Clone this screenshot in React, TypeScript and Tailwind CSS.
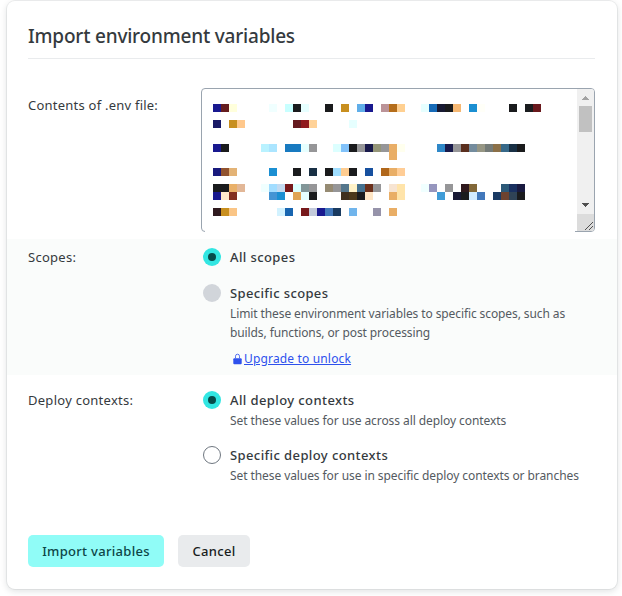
import React from 'react';

type Cell = [column: number, color: string];

const K = '#1a1b1d';
const G = '#969698';

const mosaic: { row: number; cells: Cell[] }[] = [
  { row: 0, cells: [[0, '#19198f'], [1, '#651d1f'], [2, '#ffffdc'], [7, '#f0ffff'], [9, '#c8ffff'], [10, K], [11, '#e6ffff'], [14, K], [16, '#c88f1f'], [18, '#60aee9'], [19, '#19198f'], [21, '#bb9398'], [22, '#b56e1b'], [23, '#ffd091'], [26, '#e6ffff'], [27, '#176bb8'], [28, '#181a33'], [29, K], [30, '#f5b772'], [32, '#1b8fd2'], [33, '#fffff8'], [37, K], [39, '#1a1d1f'], [40, '#6a191d']] },
  { row: 2, cells: [[0, '#191a66'], [2, '#c88f1f'], [3, '#ffc88c'], [10, '#651a1f'], [11, '#901a1d'], [12, '#ffd298'], [17, '#e6ffff']] },
  { row: 5, cells: [[0, '#19198f'], [1, K], [6, '#b9f2ff'], [7, '#abe5ff'], [9, '#187ac0'], [10, '#187ac0'], [11, '#e6ffff'], [12, G], [15, '#dcffff'], [16, '#82c2fa'], [17, K], [18, G], [19, '#191a4b'], [20, '#959678'], [21, G], [22, '#e9ae66'], [23, '#ffffee'], [28, '#2f88c8'], [29, '#191a4b'], [30, G], [31, '#5a2f1e'], [32, '#748c9d'], [33, '#969684'], [34, '#747b78'], [35, '#8b7048'], [36, '#376989'], [37, '#193045'], [38, K]] },
  { row: 6, cells: [[22, '#e9ae66']] },
  { row: 8, cells: [[0, '#191a7d'], [1, '#91532f'], [2, '#e3b376'], [7, '#1b8fd2'], [10, K], [12, '#193045'], [14, K], [15, '#a0deff'], [16, '#ffcd91'], [17, K], [19, '#17509f'], [21, '#b0671b'], [22, '#e9ae66'], [23, '#ffcd96']] },
  { row: 10, cells: [[0, K], [1, K], [2, '#e9b069'], [3, '#e2b797'], [6, '#f0ffff'], [7, '#a2ddff'], [8, '#c3daf0'], [9, '#77191b'], [10, '#dcffff'], [11, '#829698'], [12, G], [14, '#968b73'], [15, G], [16, '#54768b'], [17, '#fff2c8'], [18, '#44708f'], [19, '#6b301b'], [20, G], [22, '#f7e4d2'], [23, '#ffe4aa'], [26, '#f0ffff'], [27, '#9696be'], [29, G], [31, '#2f191d'], [32, '#826838'], [36, '#2c5978'], [37, '#193060'], [38, '#191a40']] },
  { row: 11, cells: [[0, '#19198f'], [1, '#ffeacb'], [2, '#822e20'], [7, '#4494d4'], [8, '#1b8fd2'], [10, '#e0a455'], [11, '#e6ffff'], [12, K], [16, '#3f301e'], [17, '#4b381b'], [18, K], [19, '#ffe6c5'], [22, '#e9ae66'], [23, '#ffe4aa'], [28, '#409cd7'], [30, '#191a35'], [31, K], [32, '#d2ebff'], [33, '#4278bb'], [35, '#193a63'], [36, '#6d4330'], [37, '#2f4356'], [38, K]] },
  { row: 13, cells: [[0, '#2f1a1f'], [1, '#c88f1f'], [2, '#fac586'], [8, '#d2f2ff'], [9, '#1865b0'], [11, '#77191b'], [12, '#c3cadb'], [13, '#19198f'], [14, '#4278bb'], [15, '#193a60'], [17, '#71b5ec'], [20, '#9693aa'], [22, '#e9ae66']] },
];

function Mosaic() {
  return (
    <svg width="328" height="112" shapeRendering="crispEdges" aria-hidden="true">
      {mosaic.map(({ row, cells }) =>
        cells.map(([column, color]) => (
          <rect key={`${row}-${column}`} x={column * 8} y={row * 8} width="8" height="8" fill={color} />
        )),
      )}
    </svg>
  );
}

function Scrollbar() {
  return (
    <div className="flex w-[17px] shrink-0 flex-col items-center overflow-hidden rounded-r-[3px] bg-[#f0f0f0]">
      <svg width="17" height="17" shapeRendering="crispEdges" className="shrink-0">
        <path d="M8 7h1v1h1v1h1v1h1v1H5v-1h1V9h1V8h1z" fill="#a3a3a3" />
      </svg>
      <div className="h-[26px] w-[13px] shrink-0 bg-[#c1c1c1]" />
      <div className="grow" />
      <svg width="17" height="17" shapeRendering="crispEdges" className="shrink-0">
        <path d="M5 6h7v1h-1v1h-1v1H9v1H8V9H7V8H6V7H5z" fill="#505050" />
      </svg>
      <svg width="17" height="17" shapeRendering="crispEdges" className="shrink-0 bg-[#dcdcdc]">
        <path
          d="M8 15h1v1h-1zM9 14h1v1h-1zM10 13h1v1h-1zM11 12h1v1h-1zM12 11h1v1h-1zM13 10h1v1h-1zM14 9h1v1h-1zM15 8h1v1h-1zM12 15h1v1h-1zM13 14h1v1h-1zM14 13h1v1h-1zM15 12h1v1h-1z"
          fill="#505050"
        />
      </svg>
    </div>
  );
}

function Radio({ state }: { state: 'on' | 'off' | 'disabled' }) {
  if (state === 'on') {
    return (
      <span className="mt-px flex size-[18px] shrink-0 items-center justify-center rounded-full bg-[#32e6e2]">
        <span className="size-2 rounded-full bg-[#064b4a]" />
      </span>
    );
  }
  if (state === 'disabled') return <span className="mt-px size-[18px] shrink-0 rounded-full bg-[#d1d5da]" />;
  return <span className="mt-px size-[18px] shrink-0 rounded-full border border-[#6f7780] bg-white" />;
}

export default function App() {
  return (
    <main className="h-[596px] w-[622px] overflow-hidden bg-white pl-[7px] font-['Noto_Sans','Open_Sans',sans-serif] text-[#353a3e]">
      <section className="mt-px h-[588px] w-[610px] rounded-lg bg-white shadow-[0_0_0_1px_rgba(14,30,37,0.06),0_2px_7px_rgba(14,30,37,0.14)]">
        <header className="mr-[22px] ml-[21px] h-[58px] border-b border-[#e9ebed] pt-[21px]">
          <h1 className="text-[19px] leading-7 font-medium tracking-[-0.2px] whitespace-nowrap">Import environment variables</h1>
        </header>

        <div className="flex h-[180px] pt-[29px] pl-[21px]">
          <div className="w-[173px] pt-[7px] text-[13px] leading-5 tracking-[0.23px] whitespace-nowrap">Contents of .env file:</div>
          <div className="relative flex h-[144px] w-[394px] rounded-[4px] border border-[#9aa4af]">
            <div className="grow pt-[15px] pl-[11px]"><Mosaic /></div>
            <Scrollbar />
            <div className="absolute -bottom-px left-[3px] h-px w-[370px] bg-white" />
          </div>
        </div>

        <div className="flex h-[136px] bg-[#fafcfb] pt-2 pl-[21px]">
          <div className="w-[175px] text-[13px] leading-5 tracking-[0.27px]">Scopes:</div>
          <div className="flex flex-col">
            <label className="flex h-[36px] items-start gap-[9px]">
              <Radio state="on" />
              <span className="text-[13px] leading-5 font-medium tracking-[0.4px]">All scopes</span>
            </label>
            <div className="flex items-start gap-[9px]">
              <Radio state="disabled" />
              <div className="whitespace-nowrap">
                <div className="text-[13px] leading-5 font-medium tracking-[0.36px]">Specific scopes</div>
                <p className="pt-px text-[12px] leading-[19px] tracking-[-0.1px] text-[#545a61]">
                  Limit these environment variables to specific scopes, such as<br />builds, functions, or post processing
                </p>
                <div className="flex items-center gap-[2px] pt-[7px] pl-[3px] text-[#2e51ed]">
                  <svg width="9" height="12" viewBox="0 0 9 12" fill="none">
                    <rect x="0.3" y="5.2" width="8.4" height="6" rx="1" fill="currentColor" />
                    <path d="M2.5 5.2V3.2a2 2 0 0 1 4 0v2" stroke="currentColor" strokeWidth="0.8" />
                  </svg>
                  <a className="text-[12px] leading-5 tracking-[0.16px] underline" href="#">Upgrade to unlock</a>
                </div>
              </div>
            </div>
          </div>
        </div>

        <div className="flex h-[160px] pt-[15px] pl-[21px]">
          <div className="w-[175px] text-[13px] leading-5 tracking-[0.27px]">Deploy contexts:</div>
          <div className="flex flex-col whitespace-nowrap">
            <label className="flex h-[55px] items-start gap-[9px]">
              <Radio state="on" />
              <span>
                <span className="block text-[13px] leading-5 font-medium tracking-[0.4px]">All deploy contexts</span>
                <span className="block pt-px text-[12px] leading-5 tracking-[-0.08px] text-[#545a61]">Set these values for use across all deploy contexts</span>
              </span>
            </label>
            <label className="flex items-start gap-[9px]">
              <Radio state="off" />
              <span>
                <span className="block text-[13px] leading-5 font-medium tracking-[0.4px]">Specific deploy contexts</span>
                <span className="block pt-px text-[12px] leading-5 tracking-[-0.08px] text-[#545a61]">Set these values for use in specific deploy contexts or branches</span>
              </span>
            </label>
          </div>
        </div>

        <footer className="flex gap-[14px] pl-[21px] text-[13px] font-medium tracking-[0.3px]">
          <button className="h-8 w-[136px] rounded-[5px] bg-[#90fcf7] pt-px whitespace-nowrap text-[#0c4546]">Import variables</button>
          <button className="h-8 w-[72px] rounded-[5px] bg-[#e9ebed] pt-px text-[#191c20]">Cancel</button>
        </footer>
      </section>
    </main>
  );
}
